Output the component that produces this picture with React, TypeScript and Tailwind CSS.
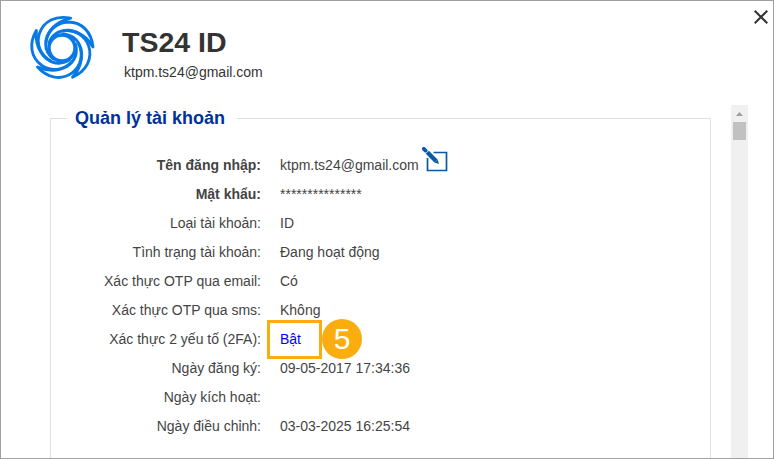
import React from 'react';

const accountRows = [
  { label: 'Tên đăng nhập:', value: 'ktpm.ts24@gmail.com', bold: true, edit: true },
  { label: 'Mật khẩu:', value: '***************', bold: true },
  { label: 'Loại tài khoản:', value: 'ID' },
  { label: 'Tình trạng tài khoản:', value: 'Đang hoạt động' },
  { label: 'Xác thực OTP qua email:', value: 'Có' },
  { label: 'Xác thực OTP qua sms:', value: 'Không' },
  { label: 'Xác thực 2 yếu tố (2FA):', value: 'Bật', step: '5' },
  { label: 'Ngày đăng ký:', value: '09-05-2017 17:34:36' },
  { label: 'Ngày kích hoạt:', value: '' },
  { label: 'Ngày điều chỉnh:', value: '03-03-2025 16:25:54' },
];

const bladeAngles = [0, 72, 144, 216, 288];

const Logo = () => (
  <svg className="h-[66px] w-[66px]" viewBox="-33 -33 66 66" fill="none">
    <circle r="13" stroke="#0879e4" strokeWidth="3.4" />
    {bladeAngles.map((angle) => (
      <path
        key={angle}
        transform={`rotate(${angle})`}
        d="M-16 -6C-14 -18 -5 -25.5 6 -26C20 -26 29.5 -16 31 -1C25 -11 17 -16.5 7 -17.8C-2 -18 -10 -14 -13.5 -4"
        stroke="#0879e4"
        strokeWidth="2.9"
        strokeLinejoin="round"
      />
    ))}
  </svg>
);

const EditIcon = () => (
  <svg className="h-[26px] w-[27px]" viewBox="0 0 27 26" fill="none">
    <path d="M11.5 5.5H24.5V23.5H5.5V11" stroke="#0b59a5" strokeWidth="1.7" />
    <path d="M1.8 1.8L3.6 3.6" stroke="#0b59a5" strokeWidth="3.8" strokeLinecap="round" />
    <path d="M5.3 5.3L14 14" stroke="#0b59a5" strokeWidth="4.4" />
    <path d="M15.6 12.4L17 17L12.4 15.6Z" fill="#0b59a5" />
  </svg>
);

const App = () => {
  return (
    <main className="relative flex h-[459px] w-[774px] flex-col overflow-hidden border border-[#a0a0a0] bg-white font-['Liberation_Sans',Arial,sans-serif] text-[#333]">
      <header className="flex h-[104px] shrink-0 items-start">
        <div className="ml-7 mt-[14px]">
          <Logo />
        </div>
        <div className="ml-[27px] mt-[25px]">
          <h1 className="text-[28.5px] font-bold leading-8">TS24 ID</h1>
          <p className="ml-[2px] mt-1 text-sm leading-5">ktpm.ts24@gmail.com</p>
        </div>
        <button className="ml-auto mr-[5px] mt-[9px]" aria-label="Đóng">
          <svg className="h-[14px] w-[14px]" viewBox="0 0 14 14">
            <path d="M.7 .7L13.3 13.3M13.3 .7L.7 13.3" stroke="#333" strokeWidth="2" />
          </svg>
        </button>
      </header>
      <div className="flex h-[353px]">
        <fieldset className="ml-[49px] h-[380px] w-[661px] border border-[#dedfe5]">
          <legend className="ml-4 h-[26px] pl-2 pr-3 text-lg font-bold leading-[26px] text-[#003399]">
            Quản lý tài khoản
          </legend>
          <div className="pt-[19px] text-sm text-[#444]">
            {accountRows.map(({ label, value, bold, edit, step }) => (
              <div className="flex h-[29px] items-center" key={label}>
                <span className={`w-[210px] text-right ${bold ? 'font-bold' : ''}`}>{label}</span>
                <span className={`relative ml-[19px] ${step ? 'text-[#0000ff]' : ''}`}>
                  {value}
                  {step && (
                    <span className="absolute -left-[13px] -top-[10px] flex items-end">
                      <span className="h-[39px] w-[55px] border-[3px] border-[#faad0f]" />
                      <span className="flex h-10 w-10 items-center justify-center rounded-full bg-[#faad0f] text-[30px] leading-10 text-white">
                        {step}
                      </span>
                    </span>
                  )}
                </span>
                {edit && (
                  <span className="-mt-[9px] ml-[3px]">
                    <EditIcon />
                  </span>
                )}
              </div>
            ))}
          </div>
        </fieldset>
        <div className="ml-5 flex w-[17px] flex-col items-center bg-[#f0f0f0]">
          <svg className="mt-[7px] h-1 w-[7px]" viewBox="0 0 7 4">
            <path d="M3.5 0L7 4H0Z" fill="#a0a0a0" />
          </svg>
          <div className="mt-[6px] h-[18px] w-[13px] bg-[#c1c1c1]" />
        </div>
      </div>
    </main>
  );
};

export default App;
